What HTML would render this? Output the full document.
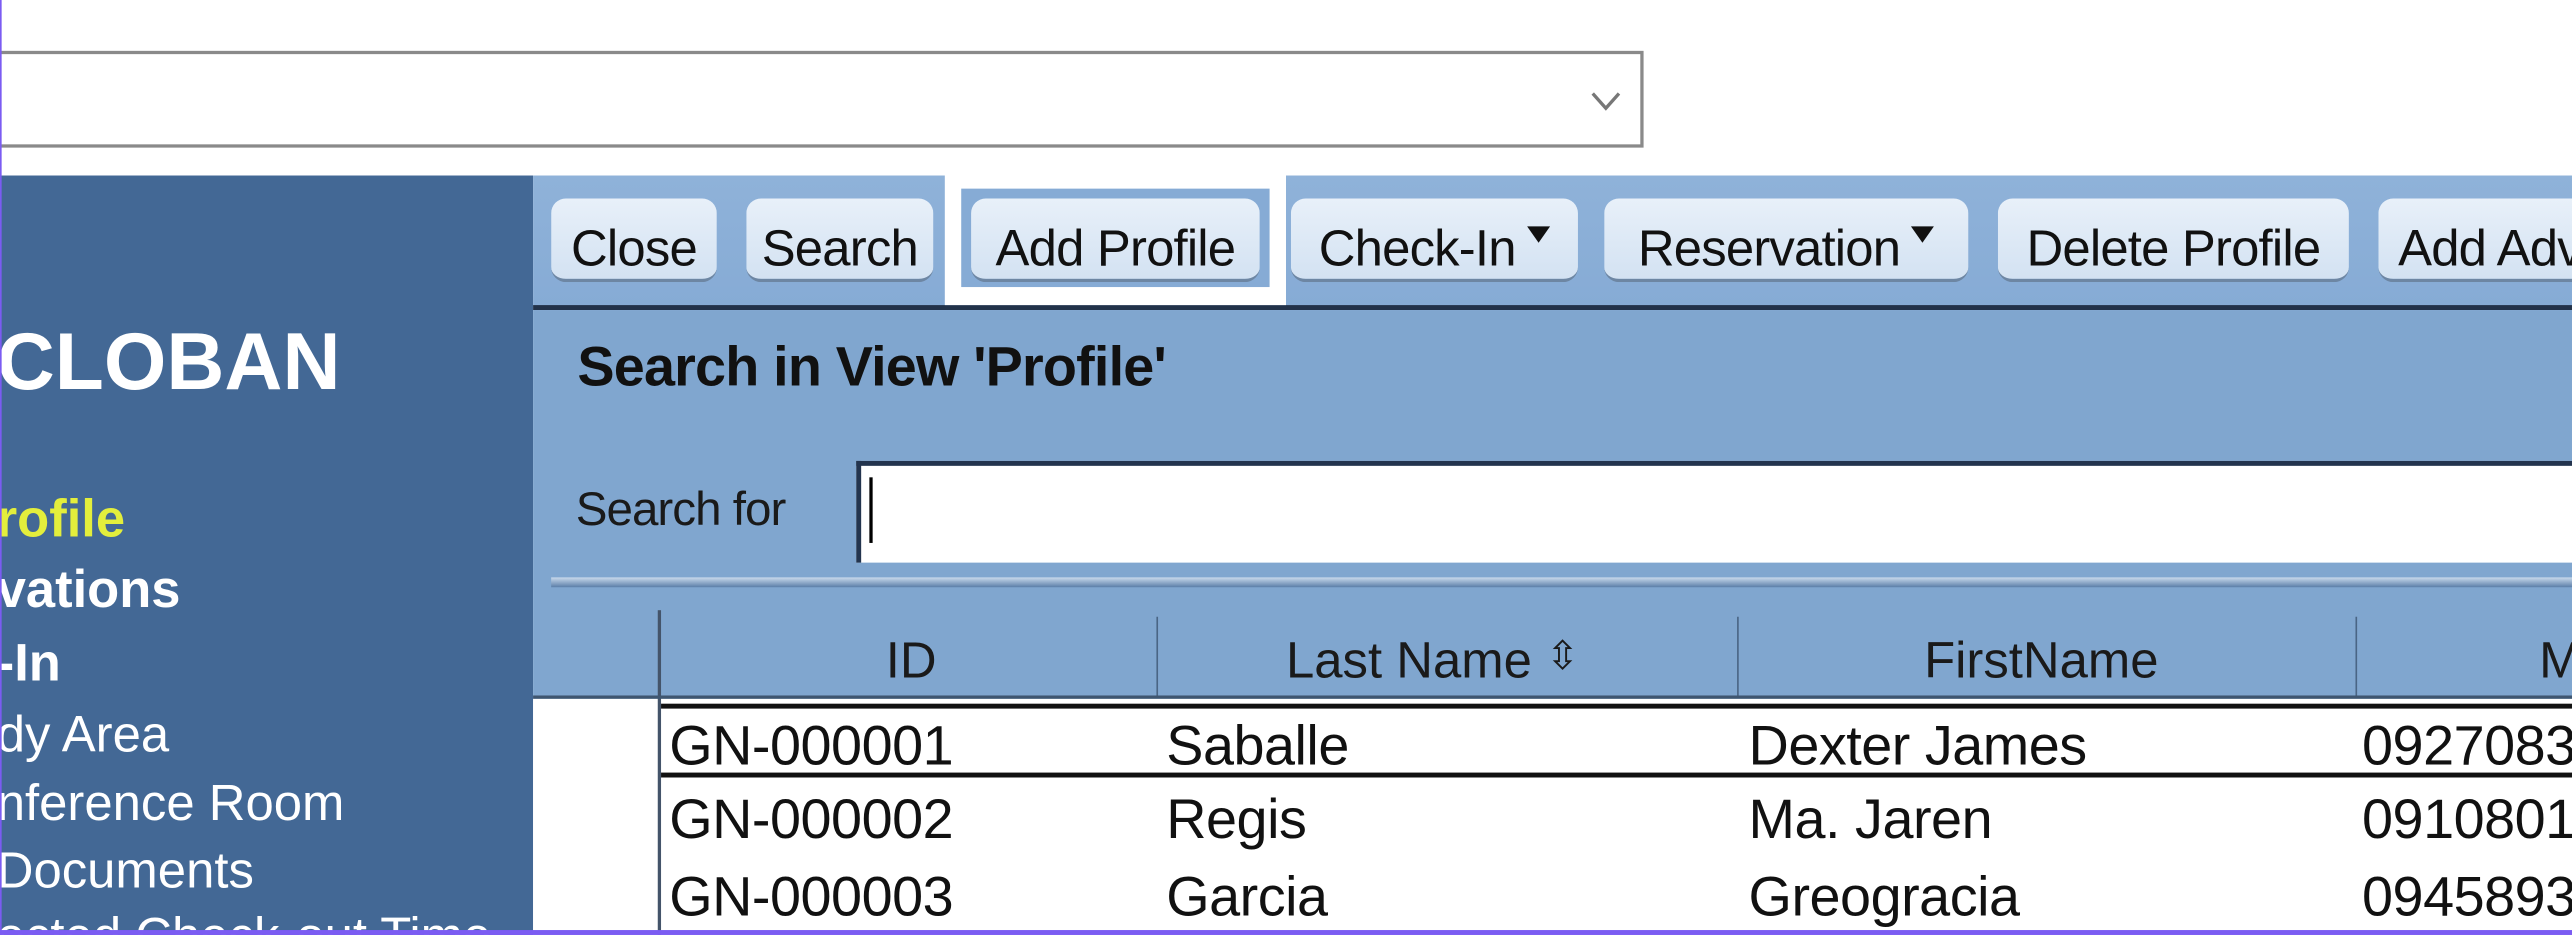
<!DOCTYPE html>
<html><head><meta charset="utf-8"><style>
html,body{margin:0;padding:0;width:2572px;height:934px;overflow:hidden;background:#fff;font-family:"Liberation Sans",Arial,sans-serif}
#w{position:absolute;left:0;top:0;width:1568px;height:570px;transform:scale(1.6403);transform-origin:0 0;overflow:hidden;background:#fff}
.a{position:absolute}
.btn{position:absolute;top:121px;height:51px;border-radius:9px;background:linear-gradient(#e8f0f9,#d3e2f2);border-bottom:2px solid #6d86a3;box-sizing:border-box;font-size:31px;color:#111;line-height:62px;text-align:center;white-space:nowrap;letter-spacing:-0.5px}
.tri{display:inline-block;width:0;height:0;border-left:7px solid transparent;border-right:7px solid transparent;border-top:10px solid #111;vertical-align:14px;margin-left:7px}
.sb{position:absolute;left:-2px;color:#fff;white-space:nowrap}
.cell{position:absolute;font-size:34px;color:#111;white-space:nowrap;letter-spacing:-0.3px}
.hd{position:absolute;font-size:31px;color:#1a1a1a;top:385px;white-space:nowrap}
</style></head><body><div id="w">
<div class="a" style="left:-2px;top:31px;width:1004px;height:59px;border:2px solid #8a8a8a;box-sizing:border-box;background:#fff"></div>
<svg class="a" style="left:969px;top:55px" width="20" height="14"><path d="M2 2 L10 11 L18 2" fill="none" stroke="#777" stroke-width="2"/></svg>
<div class="a" style="left:0;top:107px;width:325px;height:463px;background:#436895"></div>
<div class="sb" style="top:193px;font-size:49px;font-weight:bold">CLOBAN</div>
<div class="sb" style="top:298px;font-size:32px;font-weight:bold;color:#e3ee3c">rofile</div>
<div class="sb" style="top:341px;font-size:32px;font-weight:bold">vations</div>
<div class="sb" style="top:386px;font-size:32px;font-weight:bold">-In</div>
<div class="sb" style="top:430px;font-size:31px">dy Area</div>
<div class="sb" style="top:472px;font-size:31px">nference Room</div>
<div class="sb" style="top:513px;font-size:31px">Documents</div>
<div class="sb" style="top:553px;font-size:31px">ected Check-out Time</div>
<div class="a" style="left:325px;top:107px;width:1243px;height:80px;background:linear-gradient(#8fb2d9,#86abd5)"></div>
<div class="a" style="left:325px;top:186px;width:1243px;height:3px;background:#22324a"></div>
<div class="a" style="left:576px;top:104px;width:208px;height:82px;background:#fff"></div>
<div class="a" style="left:586px;top:115px;width:188px;height:60px;background:#86abd5"></div>
<div class="btn" style="left:336px;width:101px">Close</div>
<div class="btn" style="left:455px;width:114px">Search</div>
<div class="btn" style="left:592px;width:176px">Add Profile</div>
<div class="btn" style="left:787px;width:175px">Check-In<span class="tri"></span></div>
<div class="btn" style="left:978px;width:222px">Reservation<span class="tri"></span></div>
<div class="btn" style="left:1218px;width:214px">Delete Profile</div>
<div class="btn" style="left:1450px;width:150px;text-align:left;padding-left:12px">Add Adv</div>
<div class="a" style="left:325px;top:189px;width:1243px;height:238px;background:#80a6cf"></div>
<div class="a" style="left:352px;top:205px;font-size:34px;font-weight:bold;color:#111;letter-spacing:-0.5px">Search in View 'Profile'</div>
<div class="a" style="left:351px;top:295px;font-size:29px;color:#1a1a1a;letter-spacing:-0.6px">Search for</div>
<div class="a" style="left:522px;top:281px;width:1050px;height:62px;background:#fff;border-top:3px solid #23344e;border-left:3px solid #23344e;box-sizing:border-box"></div>
<div class="a" style="left:530px;top:291px;width:2px;height:40px;background:#000"></div>
<div class="a" style="left:336px;top:352px;width:1232px;height:6px;background:linear-gradient(#c9daec,#5b7ea8)"></div>
<div class="a" style="left:325px;top:426px;width:1243px;height:144px;background:#fff"></div>
<div class="a" style="left:401px;top:372px;width:2px;height:198px;background:#44546a"></div>
<div class="a" style="left:705px;top:376px;width:1px;height:48px;background:#4a6585"></div>
<div class="a" style="left:1059px;top:376px;width:1px;height:48px;background:#4a6585"></div>
<div class="a" style="left:1436px;top:376px;width:1px;height:48px;background:#4a6585"></div>
<div class="a" style="left:325px;top:424px;width:1243px;height:2px;background:#3f5670"></div>
<div class="hd" style="left:540px">ID</div>
<div class="hd" style="left:784px">Last Name <span style="font-size:24px;position:relative;top:-5px">&#8691;</span></div>
<div class="hd" style="left:1173px">FirstName</div>
<div class="hd" style="left:1548px">M</div>
<div class="a" style="left:403px;top:429px;width:1165px;height:45px;border-top:3px solid #111;border-bottom:3px solid #111;box-sizing:border-box"></div>
<div class="cell" style="left:408px;top:436px">GN-000001</div>
<div class="cell" style="left:711px;top:436px">Saballe</div>
<div class="cell" style="left:1066px;top:436px">Dexter James</div>
<div class="cell" style="left:1440px;top:436px">09270835</div>
<div class="cell" style="left:408px;top:481px">GN-000002</div>
<div class="cell" style="left:711px;top:481px">Regis</div>
<div class="cell" style="left:1066px;top:481px">Ma. Jaren</div>
<div class="cell" style="left:1440px;top:481px">09108012</div>
<div class="cell" style="left:408px;top:528px">GN-000003</div>
<div class="cell" style="left:711px;top:528px">Garcia</div>
<div class="cell" style="left:1066px;top:528px">Greogracia</div>
<div class="cell" style="left:1440px;top:528px">09458932</div>
<div class="a" style="left:0;top:0;width:1px;height:570px;background:#7b5cf2"></div>
<div class="a" style="left:0;top:567px;width:1568px;height:3px;background:#7b5cf2"></div>
</div></body></html>
